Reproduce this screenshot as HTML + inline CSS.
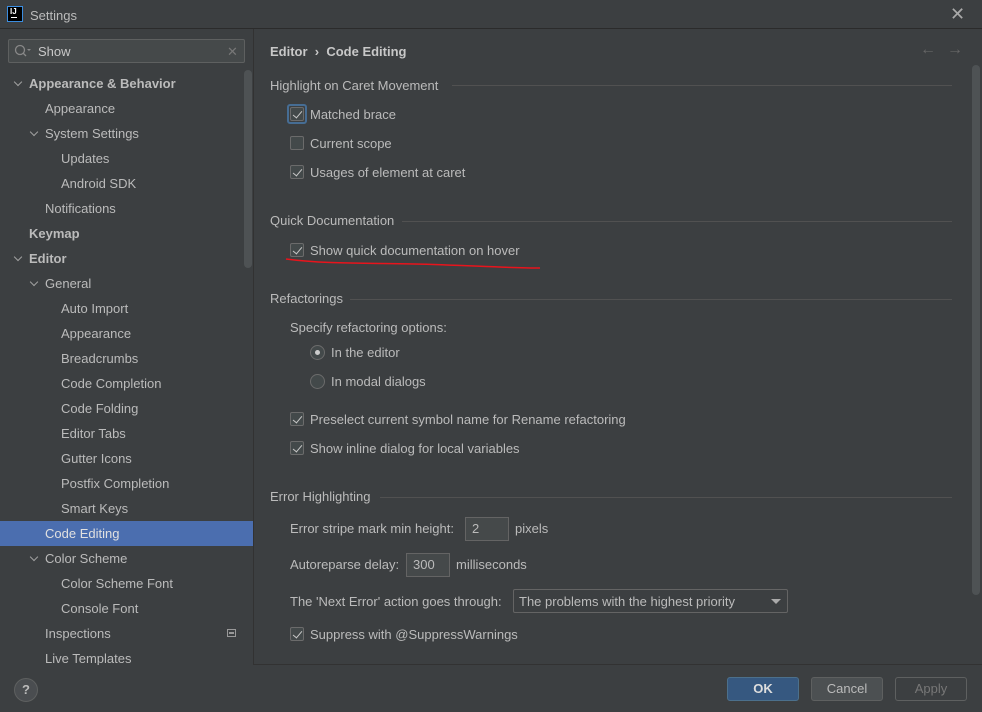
<!DOCTYPE html>
<html><head><style>
*{margin:0;padding:0;box-sizing:border-box}
body{width:982px;height:712px;background:#3c3f41;font-family:"Liberation Sans",sans-serif;font-size:13px;color:#bbbbbb;position:relative;overflow:hidden}
.a{position:absolute;white-space:nowrap}
.t{position:absolute;white-space:nowrap;line-height:16px;margin-top:1px}
.cb{position:absolute;width:14px;height:14px;border:1px solid #6b6b6b;border-radius:2px;background:#43494a}
.cb.on::after{content:"";position:absolute;left:4px;top:1px;width:4px;height:8px;border:solid #c8c8c8;border-width:0 1.6px 1.6px 0;transform:rotate(40deg)}
.rd{position:absolute;width:15px;height:15px;border:1px solid #6b6b6b;border-radius:50%;background:#43494a}
.sec{position:absolute;height:1px;background:#515151}
.arr{position:absolute;width:6px;height:6px;border:solid #a0a0a0;border-width:0 1.5px 1.5px 0;transform:rotate(45deg)}
.inp{position:absolute;height:24px;border:1px solid #646464;background:#45494a;padding:4px 6px;line-height:14px}
.btn{position:absolute;height:24px;border:1px solid #5e6060;border-radius:3px;text-align:center;line-height:22px}
</style></head><body>
<div class="a" style="left:7px;top:6px;width:16px;height:16px;background:#000;border:1px solid #3b8de0"></div>
<div class="a" style="left:10px;top:7px;color:#fff;font-size:8px;font-weight:bold">IJ</div>
<div class="a" style="left:11px;top:17px;width:6px;height:1px;background:#fff"></div>
<div class="t" style="left:30px;top:7px">Settings</div>
<div class="t" style="left:950px;top:5px;font-size:18px;color:#aaa">✕</div>
<div class="a" style="left:0;top:28px;width:982px;height:1px;background:#2b2b2b"></div>
<div class="a" style="left:253px;top:29px;width:1px;height:636px;background:#323232"></div>
<div class="a" style="left:8px;top:39px;width:237px;height:24px;border:1px solid #5e6060;border-radius:2px;background:#45494a"></div>
<svg class="a" style="left:14px;top:43px" width="20" height="16"><circle cx="6" cy="7" r="4.5" fill="none" stroke="#888" stroke-width="1.3"/><line x1="9" y1="10" x2="12" y2="13" stroke="#888" stroke-width="1.3"/><path d="M13 6h4l-2 2z" fill="#888"/></svg>
<div class="t" style="left:38px;top:43px;color:#c8c8c8">Show</div>
<div class="t" style="left:227px;top:43px;color:#777;font-size:13px">✕</div>
<div class="a" style="left:244px;top:70px;width:8px;height:198px;background:#4e5254;border-radius:4px"></div>
<div class="a" style="left:0;top:521px;width:253px;height:25px;background:#4b6eaf"></div>

<div class="arr" style="left:15px;top:79px"></div><div class="t" style="left:29px;top:75px;font-weight:bold">Appearance &amp; Behavior</div>
<div class="t" style="left:45px;top:100px">Appearance</div>
<div class="arr" style="left:31px;top:129px"></div><div class="t" style="left:45px;top:125px">System Settings</div>
<div class="t" style="left:61px;top:150px">Updates</div>
<div class="t" style="left:61px;top:175px">Android SDK</div>
<div class="t" style="left:45px;top:200px">Notifications</div>
<div class="t" style="left:29px;top:225px;font-weight:bold">Keymap</div>
<div class="arr" style="left:15px;top:254px"></div><div class="t" style="left:29px;top:250px;font-weight:bold">Editor</div>
<div class="arr" style="left:31px;top:279px"></div><div class="t" style="left:45px;top:275px">General</div>
<div class="t" style="left:61px;top:300px">Auto Import</div>
<div class="t" style="left:61px;top:325px">Appearance</div>
<div class="t" style="left:61px;top:350px">Breadcrumbs</div>
<div class="t" style="left:61px;top:375px">Code Completion</div>
<div class="t" style="left:61px;top:400px">Code Folding</div>
<div class="t" style="left:61px;top:425px">Editor Tabs</div>
<div class="t" style="left:61px;top:450px">Gutter Icons</div>
<div class="t" style="left:61px;top:475px">Postfix Completion</div>
<div class="t" style="left:61px;top:500px">Smart Keys</div>
<div class="t" style="left:45px;top:525px;color:#e0e0e0">Code Editing</div>
<div class="arr" style="left:31px;top:554px"></div><div class="t" style="left:45px;top:550px">Color Scheme</div>
<div class="t" style="left:61px;top:575px">Color Scheme Font</div>
<div class="t" style="left:61px;top:600px">Console Font</div>
<div class="t" style="left:45px;top:625px">Inspections</div>
<div class="a" style="left:227px;top:629px;width:9px;height:8px;border:1px solid #999"></div><div class="a" style="left:229px;top:632px;width:5px;height:2px;background:#999"></div>
<div class="t" style="left:45px;top:650px">Live Templates</div>

<div class="t" style="left:270px;top:43px;font-weight:bold;color:#c8c8c8">Editor &nbsp;›&nbsp; Code Editing</div>
<div class="t" style="left:920px;top:41px;color:#666;font-size:16px">←</div>
<div class="t" style="left:947px;top:41px;color:#666;font-size:16px">→</div>
<div class="a" style="left:972px;top:65px;width:8px;height:530px;background:#4e5254;border-radius:4px"></div>

<div class="t" style="left:270px;top:77px">Highlight on Caret Movement</div><div class="sec" style="left:452px;top:85px;width:500px"></div>
<div class="a" style="left:287px;top:104px;width:20px;height:20px;border:2px solid #466d94;border-radius:3px"></div>
<div class="cb on" style="left:290px;top:107px"></div><div class="t" style="left:310px;top:106px">Matched brace</div>
<div class="cb" style="left:290px;top:136px"></div><div class="t" style="left:310px;top:135px">Current scope</div>
<div class="cb on" style="left:290px;top:165px"></div><div class="t" style="left:310px;top:164px">Usages of element at caret</div>

<div class="t" style="left:270px;top:212px">Quick Documentation</div><div class="sec" style="left:402px;top:221px;width:550px"></div>
<div class="cb on" style="left:290px;top:243px"></div><div class="t" style="left:310px;top:242px">Show quick documentation on hover</div>
<svg class="a" style="left:284px;top:255px" width="260" height="16"><path d="M2 4 C40 9,80 8,130 9 S220 13,256 13" fill="none" stroke="#e8141c" stroke-width="1.5"/></svg>

<div class="t" style="left:270px;top:290px">Refactorings</div><div class="sec" style="left:350px;top:299px;width:602px"></div>
<div class="t" style="left:290px;top:319px">Specify refactoring options:</div>
<div class="rd" style="left:310px;top:345px"></div><div class="a" style="left:315px;top:350px;width:5px;height:5px;border-radius:50%;background:#ccc"></div><div class="t" style="left:331px;top:344px">In the editor</div>
<div class="rd" style="left:310px;top:374px"></div><div class="t" style="left:331px;top:373px">In modal dialogs</div>
<div class="cb on" style="left:290px;top:412px"></div><div class="t" style="left:310px;top:411px">Preselect current symbol name for Rename refactoring</div>
<div class="cb on" style="left:290px;top:441px"></div><div class="t" style="left:310px;top:440px">Show inline dialog for local variables</div>

<div class="t" style="left:270px;top:488px">Error Highlighting</div><div class="sec" style="left:380px;top:497px;width:572px"></div>
<div class="t" style="left:290px;top:520px">Error stripe mark min height:</div>
<div class="inp" style="left:465px;top:517px;width:44px">2</div><div class="t" style="left:515px;top:520px">pixels</div>
<div class="t" style="left:290px;top:556px">Autoreparse delay:</div>
<div class="inp" style="left:406px;top:553px;width:44px">300</div><div class="t" style="left:456px;top:556px">milliseconds</div>
<div class="t" style="left:290px;top:593px">The 'Next Error' action goes through:</div>
<div class="a" style="left:513px;top:589px;width:275px;height:24px;border:1px solid #646464;border-radius:2px"></div>
<div class="t" style="left:519px;top:593px">The problems with the highest priority</div>
<div class="a" style="left:771px;top:599px;border:5px solid transparent;border-top:5px solid #aaa;border-bottom:0"></div>
<div class="cb on" style="left:290px;top:627px"></div><div class="t" style="left:310px;top:626px">Suppress with @SuppressWarnings</div>

<div class="a" style="left:254px;top:664px;width:728px;height:1px;background:#323232"></div>
<div class="a" style="left:0;top:665px;width:982px;height:47px;background:#3c3f41"></div>
<div class="a" style="left:14px;top:678px;width:24px;height:24px;border-radius:50%;background:#4a4d50;border:1px solid #5e6060;text-align:center;line-height:22px;font-weight:bold;color:#bbb">?</div>
<div class="btn" style="left:727px;top:677px;width:72px;background:#365880;border-color:#4c708c;font-weight:bold;color:#ddd">OK</div>
<div class="btn" style="left:811px;top:677px;width:72px;background:#4c5052">Cancel</div>
<div class="btn" style="left:895px;top:677px;width:72px;color:#777">Apply</div>
</body></html>
